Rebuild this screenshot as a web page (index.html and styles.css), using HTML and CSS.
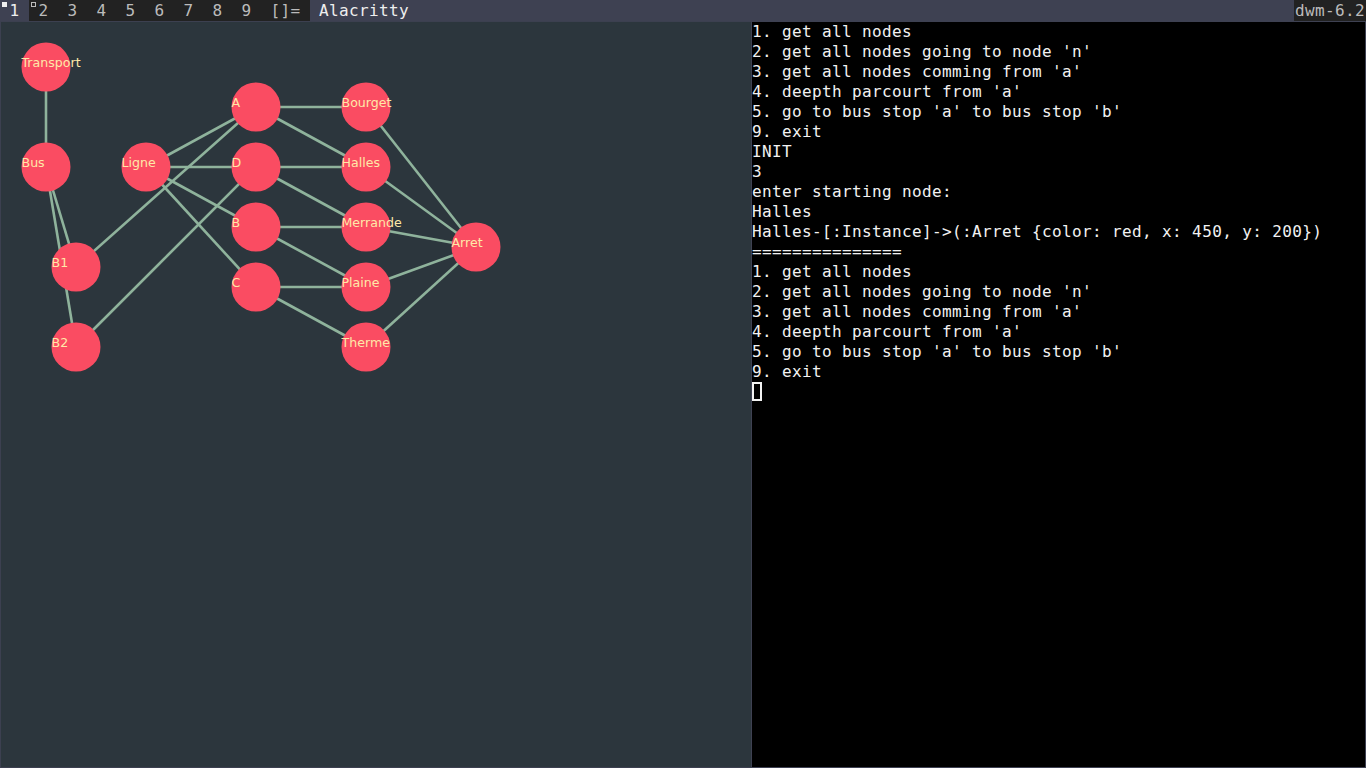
FILE: index.html
```html
<!DOCTYPE html>
<html>
<head>
<meta charset="utf-8">
<link rel="stylesheet" href="styles.css">
</head>
<body>
<div class="bar">
  <div class="tags">
    <div class="tag sel"><span class="ind fill"></span>1</div>
    <div class="tag"><span class="ind hollow"></span>2</div>
    <div class="tag">3</div>
    <div class="tag">4</div>
    <div class="tag">5</div>
    <div class="tag">6</div>
    <div class="tag">7</div>
    <div class="tag">8</div>
    <div class="tag">9</div>
    <div class="layout">[]=</div>
  </div>
  <div class="title">Alacritty</div>
  <div class="status">dwm-6.2</div>
</div>
<div class="desk">
  <div class="win graphwin">
    <svg class="graph" viewBox="1 22 749 745" width="749" height="745">
      <g class="edges">
        <line x1="46" y1="67" x2="46" y2="167"/>
        <line x1="46" y1="167" x2="76" y2="267"/>
        <line x1="46" y1="167" x2="76" y2="347"/>
        <line x1="76" y1="267" x2="256" y2="107"/>
        <line x1="76" y1="347" x2="256" y2="167"/>
        <line x1="146" y1="167" x2="256" y2="107"/>
        <line x1="146" y1="167" x2="256" y2="167"/>
        <line x1="146" y1="167" x2="256" y2="227"/>
        <line x1="146" y1="167" x2="256" y2="287"/>
        <line x1="256" y1="107" x2="366" y2="107"/>
        <line x1="256" y1="107" x2="366" y2="167"/>
        <line x1="256" y1="167" x2="366" y2="167"/>
        <line x1="256" y1="167" x2="366" y2="227"/>
        <line x1="256" y1="227" x2="366" y2="227"/>
        <line x1="256" y1="227" x2="366" y2="287"/>
        <line x1="256" y1="287" x2="366" y2="287"/>
        <line x1="256" y1="287" x2="366" y2="347"/>
        <line x1="366" y1="107" x2="476" y2="247"/>
        <line x1="366" y1="167" x2="476" y2="247"/>
        <line x1="366" y1="227" x2="476" y2="247"/>
        <line x1="366" y1="287" x2="476" y2="247"/>
        <line x1="366" y1="347" x2="476" y2="247"/>
      </g>
      <g class="nodes">
        <circle cx="46" cy="67" r="24.5"/>
        <circle cx="46" cy="167" r="24.5"/>
        <circle cx="76" cy="267" r="24.5"/>
        <circle cx="76" cy="347" r="24.5"/>
        <circle cx="146" cy="167" r="24.5"/>
        <circle cx="256" cy="107" r="24.5"/>
        <circle cx="256" cy="167" r="24.5"/>
        <circle cx="256" cy="227" r="24.5"/>
        <circle cx="256" cy="287" r="24.5"/>
        <circle cx="366" cy="107" r="24.5"/>
        <circle cx="366" cy="167" r="24.5"/>
        <circle cx="366" cy="227" r="24.5"/>
        <circle cx="366" cy="287" r="24.5"/>
        <circle cx="366" cy="347" r="24.5"/>
        <circle cx="476" cy="247" r="24.5"/>
      </g>
      <g class="labels">
        <text x="21.5" y="67">Transport</text>
        <text x="21.5" y="167">Bus</text>
        <text x="51.5" y="267">B1</text>
        <text x="51.5" y="347">B2</text>
        <text x="121.5" y="167">Ligne</text>
        <text x="231.5" y="107">A</text>
        <text x="231.5" y="167">D</text>
        <text x="231.5" y="227">B</text>
        <text x="231.5" y="287">C</text>
        <text x="341.5" y="107">Bourget</text>
        <text x="341.5" y="167">Halles</text>
        <text x="341.5" y="227">Merrande</text>
        <text x="341.5" y="287">Plaine</text>
        <text x="341.5" y="347">Therme</text>
        <text x="451.5" y="247">Arret</text>
      </g>
    </svg>
  </div>
  <div class="win term">
<pre class="out">1. get all nodes
2. get all nodes going to node 'n'
3. get all nodes comming from 'a'
4. deepth parcourt from 'a'
5. go to bus stop 'a' to bus stop 'b'
9. exit
INIT
3
enter starting node:
Halles
Halles-[:Instance]-&gt;(:Arret {color: red, x: 450, y: 200})
===============
1. get all nodes
2. get all nodes going to node 'n'
3. get all nodes comming from 'a'
4. deepth parcourt from 'a'
5. go to bus stop 'a' to bus stop 'b'
9. exit
<span class="cursor"></span></pre>
  </div>
</div>
</body>
</html>
```
FILE: styles.css
```css
html, body {
  margin: 0;
  padding: 0;
  width: 1366px;
  height: 768px;
  overflow: hidden;
  background: #000;
}
body {
  display: flex;
  flex-direction: column;
  font-family: "DejaVu Sans Mono", monospace;
}
.bar {
  height: 21px;
  display: flex;
  background: #3e4152;
  color: #bbbbbb;
  font-size: 16px;
  letter-spacing: 0.37px;
  line-height: 21px;
}
.tags {
  display: flex;
  background: #222222;
}
.tag {
  position: relative;
  width: 29px;
  text-align: center;
}
.tag.sel {
  background: #3e4152;
  color: #eeeeee;
}
.ind {
  position: absolute;
  left: 2px;
  top: 2px;
  width: 5px;
  height: 5px;
  box-sizing: border-box;
}
.ind.fill {
  background: #eeeeee;
}
.ind.hollow {
  border: 1px solid #bbbbbb;
}
.layout {
  width: 49px;
  text-align: center;
}
.title {
  flex: 1;
  padding-left: 9px;
  color: #eeeeee;
}
.status {
  width: 72px;
  padding-left: 1px;
  box-sizing: border-box;
  background: #222222;
}
.desk {
  flex: 1;
  display: flex;
}
.win {
  box-sizing: border-box;
  border: 1px solid #3e4152;
  height: 747px;
}
.graphwin {
  width: 751px;
  background: #2c363d;
  border-color: #3c4050;
  border-right: none;
}
.graph {
  display: block;
}
.edges line {
  stroke: #8fb39c;
  stroke-width: 2.6;
}
.nodes circle {
  fill: #fa4c62;
}
.labels text {
  fill: #ffe8a8;
  font-family: "DejaVu Sans", sans-serif;
  font-size: 12.6px;
}
.term {
  width: 615px;
  background: #000;
}
.out {
  margin: 0;
  color: #f2f2f2;
  font-family: "DejaVu Sans Mono", monospace;
  font-size: 16px;
  letter-spacing: 0.37px;
  line-height: 20px;
}
.cursor {
  display: inline-block;
  width: 10px;
  height: 19px;
  box-sizing: border-box;
  border: 2px solid #f2f2f2;
  vertical-align: top;
}
```
